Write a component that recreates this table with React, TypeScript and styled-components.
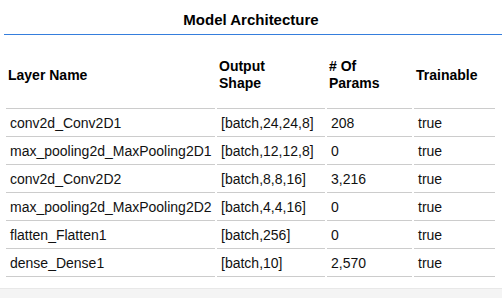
import React from "react";
import styled, { createGlobalStyle } from "styled-components";

const Global = createGlobalStyle`
  html, body { margin: 0; padding: 0; background: #fff; }
  body { font-family: "Liberation Sans", Arial, sans-serif; width: 502px; height: 298px; overflow: hidden; }
`;

const Surface = styled.div`
  display: flex;
  flex-direction: column;
  width: 502px;
  height: 298px;
`;

const TitleBar = styled.div`
  margin-left: 4px;
  padding: 11px 4px 6px 0;
  line-height: 17px;
  font-size: 15px;
  font-weight: 700;
  color: #000;
  text-align: center;
  border-bottom: 1px solid #357edd;
`;

const Table = styled.table`
  margin: 5px 0 0 4px;
  width: 493px;
  table-layout: fixed;
  border-collapse: separate;
  border-spacing: 2px;
  font-size: 14px;
  line-height: 17px;
`;

const Col = styled.col<{ $w: number }>`
  width: ${(p) => p.$w}px;
`;

const Th = styled.th`
  padding: 16px 20px 16px 2px;
  text-align: left;
  vertical-align: middle;
  font-weight: 700;
  color: #000;
  border-bottom: 1px solid #cccccc;
  overflow: visible;
  white-space: normal;
`;

const Td = styled.td`
  padding: 4px 4px;
  color: #111;
  border-bottom: 1px solid #cccccc;
  white-space: nowrap;
`;

const Footer = styled.div`
  margin-top: auto;
  height: 9px;
  background: #f4f4f4;
  border-top: 1px solid #e8e8e8;
`;

const rows = [
  ["conv2d_Conv2D1", "[batch,24,24,8]", "208", "true"],
  ["max_pooling2d_MaxPooling2D1", "[batch,12,12,8]", "0", "true"],
  ["conv2d_Conv2D2", "[batch,8,8,16]", "3,216", "true"],
  ["max_pooling2d_MaxPooling2D2", "[batch,4,4,16]", "0", "true"],
  ["flatten_Flatten1", "[batch,256]", "0", "true"],
  ["dense_Dense1", "[batch,10]", "2,570", "true"],
];

export default function App() {
  return (
    <Surface>
      <Global />
      <TitleBar>Model Architecture</TitleBar>
      <Table>
        <colgroup>
          <Col $w={209} />
          <Col $w={108} />
          <Col $w={85} />
          <Col $w={81} />
        </colgroup>
        <thead>
          <tr>
            <Th>Layer Name</Th>
            <Th>Output Shape</Th>
            <Th># Of Params</Th>
            <Th>Trainable</Th>
          </tr>
        </thead>
        <tbody>
          {rows.map((r) => (
            <tr key={r[0]}>
              {r.map((c, i) => (
                <Td key={i}>{c}</Td>
              ))}
            </tr>
          ))}
        </tbody>
      </Table>
      <Footer />
    </Surface>
  );
}
